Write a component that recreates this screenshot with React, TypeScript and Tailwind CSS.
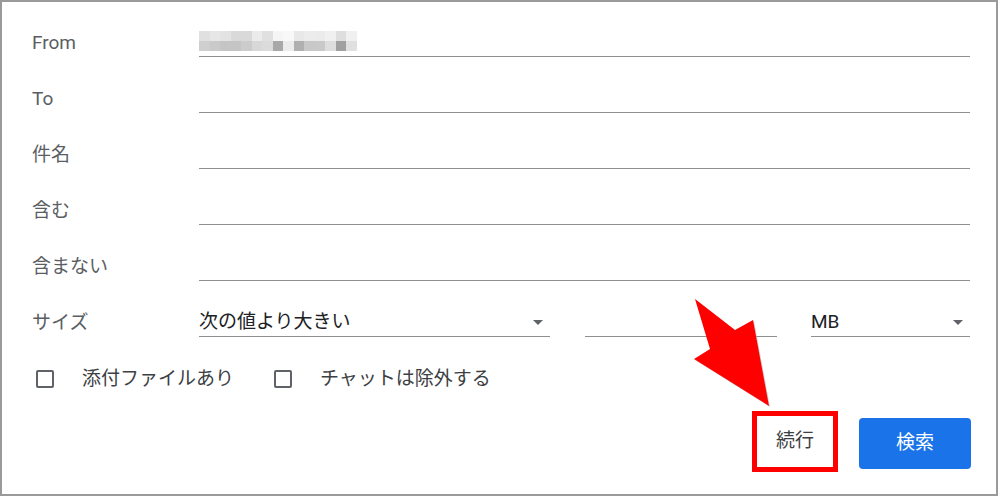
const jp = { fontFamily: 'Roboto, "Noto Sans CJK JP", sans-serif' };

const topRow = ['#e0e0e0', '#e6e6e6', '#e3e3e3', '#d9d9d9', '#d9d9d9', '#ebebeb', '#e0e0e0', '#f5f5f5', '#f8f8f8', '#e8e8e8', '#ececec', '#ebebeb', '#f0f0f0', '#dedede', '#f0f0f0'];
const bottomRow = ['#cfcfcf', '#cacaca', '#c5c5c5', '#c5c5c5', '#cccccc', '#d8d8d8', '#dbdbdb', '#a8a8a8', '#ececec', '#b0b0b0', '#c8c8c8', '#c9c9c9', '#dedede', '#a0a0a0', '#e0e0e0'];

const Caret = () => (
  <svg width="10" height="5" viewBox="0 0 10 5" className="shrink-0">
    <path d="M0 0 L10 0 L5 5 Z" fill="#5f6368" />
  </svg>
);

const Mosaic = () => (
  <div className="flex flex-col mb-[5px]">
    <div className="flex">
      {topRow.map((c, i) => (
        <div key={i} className="w-[10.5px] h-[10px]" style={{ backgroundColor: c }} />
      ))}
    </div>
    <div className="flex">
      {bottomRow.map((c, i) => (
        <div key={i} className="w-[10.5px] h-[10px]" style={{ backgroundColor: c }} />
      ))}
    </div>
  </div>
);

const Row = ({ label, children }: { label: string; children?: React.ReactNode }) => (
  <div className="flex items-end h-[56px]">
    <div className="w-[167px] h-[28px] leading-[28px] text-[19px] text-[#5a5e63]">{label}</div>
    <div className="flex-1 h-[28px] border-b border-[#8f8f8f] flex items-end">{children}</div>
  </div>
);

const Checkbox = ({ label }: { label: string }) => (
  <div className="flex items-center gap-[28px]">
    <div className="w-[18px] h-[18px] border-2 border-[#5f6368] rounded-[2px]" />
    <span className="text-[19px] text-[#3c4043]">{label}</span>
  </div>
);

export default function App() {
  return (
    <div className="relative w-[998px] h-[496px] border-2 border-[#9a9a9a] bg-white" style={jp}>
      <div className="pl-[30px] pr-[26px] -mt-px">
        <Row label="From">
          <Mosaic />
        </Row>
        <Row label="To" />
        <Row label="件名" />
        <Row label="含む" />
        <Row label="含まない" />
        <div className="flex items-end h-[56px]">
          <div className="w-[167px] h-[28px] leading-[28px] text-[19px] text-[#5a5e63]">サイズ</div>
          <div className="w-[351px] h-[28px] border-b border-[#8f8f8f] flex items-center justify-between pr-[7px]">
            <span className="text-[19px] text-[#202124]">次の値より大きい</span>
            <Caret />
          </div>
          <div className="w-[192px] h-[28px] border-b border-[#8f8f8f] ml-[35px]" />
          <div className="flex-1 h-[28px] border-b border-[#8f8f8f] ml-[34px] flex items-center justify-between pr-[7px]">
            <span className="text-[19px] text-[#202124]">MB</span>
            <Caret />
          </div>
        </div>
        <div className="flex items-center gap-[40px] pl-[4px] mt-[33px] h-[18px]">
          <Checkbox label="添付ファイルあり" />
          <Checkbox label="チャットは除外する" />
        </div>
        <div className="flex items-start justify-end mt-[23px] -mr-px">
          <div className="border-[5px] border-[#ff0000] w-[86px] h-[61px] flex items-center justify-center">
            <span className="text-[19px] text-[#3c4043]">続行</span>
          </div>
          <button className="ml-[21px] mt-[7px] w-[112px] h-[51px] rounded-[4px] bg-[#1a73e8] text-white text-[19px]">検索</button>
        </div>
      </div>
      <svg className="absolute left-[680px] top-[285px]" width="100" height="130" viewBox="680 285 100 130">
        <polygon points="694,298 734,329 752,319 768,405 693,358 709,348" fill="#b0b0b0" opacity="0.6" />
        <polygon points="693,297 733,328 751,318 767,404 692,357 708,347" fill="#ff0000" />
      </svg>
    </div>
  );
}
